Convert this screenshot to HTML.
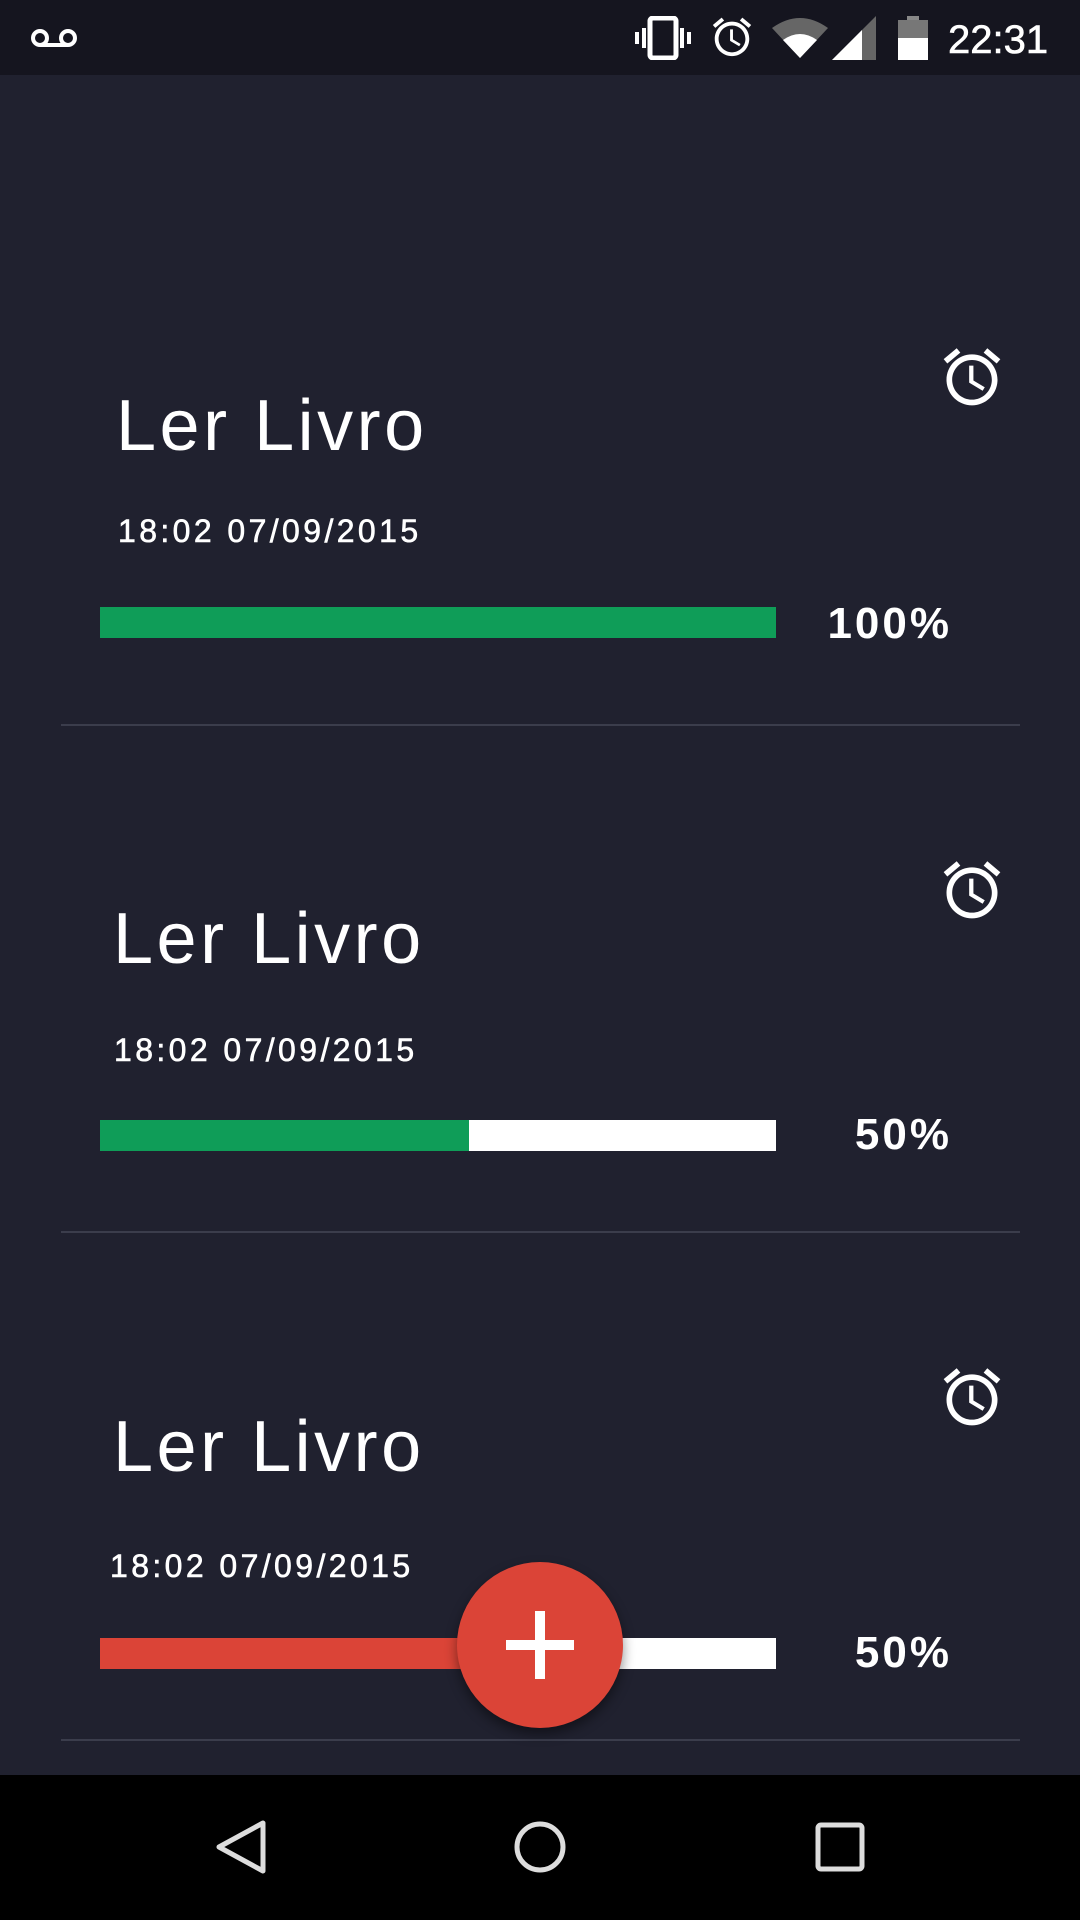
<!DOCTYPE html>
<html><head><meta charset="utf-8"><style>
*{margin:0;padding:0;box-sizing:border-box}
body{width:1080px;height:1920px;background:#20212f;position:relative;overflow:hidden;font-family:"Liberation Sans",sans-serif;color:#fff}
.sb{position:absolute;left:0;top:0;width:1080px;height:75px;background:#15151f}
.abs{position:absolute}
.title{position:absolute;font-size:72px;line-height:1;letter-spacing:3.5px}
.date{position:absolute;font-size:32px;line-height:1;letter-spacing:3.4px;-webkit-text-stroke:0.6px #fff}
.pct{position:absolute;font-size:44px;line-height:1;text-align:right;width:200px;letter-spacing:3px;font-weight:bold}
.bar{position:absolute;left:100px;width:676px;height:31px;background:#fff}
.div{position:absolute;left:61px;width:959px;height:2px;background:#3b3d4c}
.nav{position:absolute;left:0;top:1775px;width:1080px;height:145px;background:#000}
</style></head><body>
<div class="sb">
<svg class="abs" style="left:30px;top:27px" width="48" height="22" viewBox="0 0 48 22"><circle cx="10" cy="11" r="7" fill="none" stroke="#fff" stroke-width="4"/><circle cx="38" cy="11" r="7" fill="none" stroke="#fff" stroke-width="4"/><rect x="10" y="16" width="28" height="4" fill="#fff"/></svg>
<svg class="abs" style="left:634px;top:16px" width="58" height="44" viewBox="0 0 58 44"><rect x="16" y="2" width="26" height="40" rx="3" fill="none" stroke="#fff" stroke-width="5"/><rect x="8" y="12" width="4" height="20" fill="#fff"/><rect x="1" y="16" width="4" height="12" fill="#fff"/><rect x="46" y="12" width="4" height="20" fill="#fff"/><rect x="53" y="16" width="4" height="12" fill="#fff"/></svg>
<svg class="abs" style="left:709px;top:14px" width="46" height="46" viewBox="0 0 24 24" fill="#fff"><path d="M22 5.72l-4.6-3.86-1.29 1.53 4.6 3.86L22 5.72zM7.88 3.39L6.6 1.86 2 5.71l1.29 1.53 4.59-3.85zM12.5 8H11v6l4.75 2.85.75-1.23-4-2.37V8zM12 4c-4.97 0-9 4.03-9 9s4.02 9 9 9c4.97 0 9-4.03 9-9s-4.03-9-9-9zm0 16c-3.87 0-7-3.13-7-7s3.13-7 7-7 7 3.13 7 7-3.13 7-7 7z"/></svg>
<svg class="abs" style="left:772px;top:16px" width="56" height="44" viewBox="0 0 56 44"><path d="M0 12 Q28 -8 56 12 L28 42Z" fill="#666"/><path d="M11 24 Q28 12 45 24 L28 42Z" fill="#fff"/></svg>
<svg class="abs" style="left:832px;top:16px" width="44" height="44" viewBox="0 0 44 44"><path d="M44 0V44H0Z" fill="#666"/><path d="M30 14V44H0Z" fill="#fff"/></svg>
<svg class="abs" style="left:898px;top:16px" width="30" height="44" viewBox="0 0 30 44"><rect x="9" y="0" width="12" height="4" fill="#888"/><rect x="0" y="4" width="30" height="40" fill="#777"/><rect x="0" y="22" width="30" height="22" fill="#fff"/></svg>
<div class="abs" style="left:948px;top:18px;font-size:40px;-webkit-text-stroke:0.6px #fff">22:31</div>
</div>

<svg class="abs" style="left:938px;top:343px" width="68" height="68" viewBox="0 0 24 24" fill="#fff"><path d="M22 5.72l-4.6-3.86-1.29 1.53 4.6 3.86L22 5.72zM7.88 3.39L6.6 1.86 2 5.71l1.29 1.53 4.59-3.85zM12.5 8H11v6l4.75 2.85.75-1.23-4-2.37V8zM12 4c-4.97 0-9 4.03-9 9s4.02 9 9 9c4.97 0 9-4.03 9-9s-4.03-9-9-9zm0 16c-3.87 0-7-3.13-7-7s3.13-7 7-7 7 3.13 7 7-3.13 7-7 7z"/></svg>
<div class="title" style="left:116px;top:390px">Ler Livro</div>
<div class="date" style="left:118px;top:515px">18:02 07/09/2015</div>
<div class="bar" style="top:607px;background:#0f9d58"></div>
<div class="pct" style="left:752px;top:602px">100%</div>
<div class="div" style="top:724px"></div>

<svg class="abs" style="left:938px;top:856px" width="68" height="68" viewBox="0 0 24 24" fill="#fff"><path d="M22 5.72l-4.6-3.86-1.29 1.53 4.6 3.86L22 5.72zM7.88 3.39L6.6 1.86 2 5.71l1.29 1.53 4.59-3.85zM12.5 8H11v6l4.75 2.85.75-1.23-4-2.37V8zM12 4c-4.97 0-9 4.03-9 9s4.02 9 9 9c4.97 0 9-4.03 9-9s-4.03-9-9-9zm0 16c-3.87 0-7-3.13-7-7s3.13-7 7-7 7 3.13 7 7-3.13 7-7 7z"/></svg>
<div class="title" style="left:113px;top:903px">Ler Livro</div>
<div class="date" style="left:114px;top:1034px">18:02 07/09/2015</div>
<div class="bar" style="top:1120px"><div style="width:369px;height:100%;background:#0f9d58"></div></div>
<div class="pct" style="left:752px;top:1113px">50%</div>
<div class="div" style="top:1231px"></div>

<svg class="abs" style="left:938px;top:1363px" width="68" height="68" viewBox="0 0 24 24" fill="#fff"><path d="M22 5.72l-4.6-3.86-1.29 1.53 4.6 3.86L22 5.72zM7.88 3.39L6.6 1.86 2 5.71l1.29 1.53 4.59-3.85zM12.5 8H11v6l4.75 2.85.75-1.23-4-2.37V8zM12 4c-4.97 0-9 4.03-9 9s4.02 9 9 9c4.97 0 9-4.03 9-9s-4.03-9-9-9zm0 16c-3.87 0-7-3.13-7-7s3.13-7 7-7 7 3.13 7 7-3.13 7-7 7z"/></svg>
<div class="title" style="left:113px;top:1411px">Ler Livro</div>
<div class="date" style="left:110px;top:1550px">18:02 07/09/2015</div>
<div class="bar" style="top:1638px"><div style="width:369px;height:100%;background:#db4437"></div></div>
<div class="pct" style="left:752px;top:1631px">50%</div>
<div class="div" style="top:1739px"></div>

<div class="abs" style="left:457px;top:1562px;width:166px;height:166px;border-radius:50%;background:#db4437;box-shadow:0 6px 12px rgba(0,0,0,0.45)"></div>
<div class="abs" style="left:506px;top:1640px;width:68px;height:10px;background:#fff"></div>
<div class="abs" style="left:535px;top:1611px;width:10px;height:68px;background:#fff"></div>

<div class="nav">
<svg class="abs" style="left:213px;top:44px" width="56" height="56" viewBox="0 0 56 56"><path d="M50 4V52L6 28Z" fill="none" stroke="#ddd" stroke-width="5" stroke-linejoin="round"/></svg>
<svg class="abs" style="left:512px;top:44px" width="56" height="56" viewBox="0 0 56 56"><circle cx="28" cy="28" r="23" fill="none" stroke="#ddd" stroke-width="5"/></svg>
<svg class="abs" style="left:815px;top:47px" width="50" height="50" viewBox="0 0 50 50"><rect x="3" y="3" width="44" height="44" rx="3" fill="none" stroke="#ddd" stroke-width="5"/></svg>
</div>
</body></html>
